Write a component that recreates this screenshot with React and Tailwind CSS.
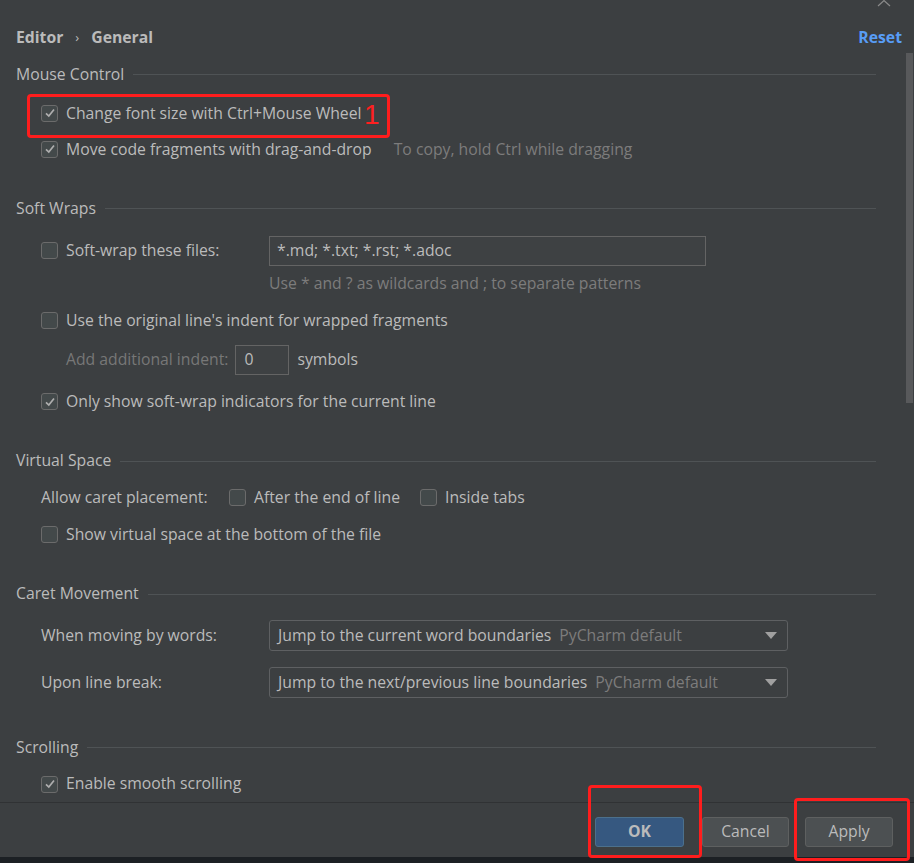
import React from "react";

const font = { fontFamily: '"Open Sans", "Noto Sans", sans-serif' };

function Box({ checked }) {
  return (
    <span className="w-[17px] h-[17px] shrink-0 rounded-[3px] border border-[#6b6b6b] bg-[#43494a] flex items-center justify-center">
      {checked && (
        <svg width="12" height="12" viewBox="0 0 12 12">
          <path d="M2 6.3 L4.8 9 L10 2.5" fill="none" stroke="#aeaeae" strokeWidth="1.7" />
        </svg>
      )}
    </span>
  );
}

function Check({ checked, label, className = "" }) {
  return (
    <div className={`flex items-center gap-[8px] ${className}`}>
      <Box checked={checked} />
      <span>{label}</span>
    </div>
  );
}

function Section({ title, className = "" }) {
  return (
    <div className={`h-[36px] flex items-center gap-[9px] ${className}`}>
      <span>{title}</span>
      <div className="flex-1 h-px bg-[#4f5355]" />
    </div>
  );
}

function Dropdown({ value, hint }) {
  return (
    <div className="w-[519px] h-[31px] rounded-[3px] border border-[#5e6062] flex items-center pl-[8px] pr-[10px]">
      <span>{value}</span>
      <span className="ml-[8px] text-[#7c7c7c]">{hint}</span>
      <svg className="ml-auto" width="12" height="7" viewBox="0 0 12 7">
        <path d="M0 0 H12 L6 7 Z" fill="#a0a0a0" />
      </svg>
    </div>
  );
}

export default function App() {
  return (
    <div className="w-[914px] h-[863px] bg-[#3c3f41] relative overflow-hidden text-[15.75px] text-[#bbbbbb]" style={font}>
      <div className="flex h-[802px]">
        <div className="flex-1 pl-[16px] pr-[30px] flex flex-col">
          {/* breadcrumb */}
          <div className="h-[36px] mt-[21px] flex items-center font-bold">
            <span>Editor</span>
            <span className="mx-[12px] font-normal text-[13px]">›</span>
            <span>General</span>
            <span className="ml-auto text-[#589df6] -mr-[26px]">Reset</span>
          </div>

          <Section title="Mouse Control" className="mt-[4px] w-[860px]" />
          <div className="pl-[25px] flex flex-col">
            <Check checked label="Change font size with Ctrl+Mouse Wheel" className="h-[36px] mt-[4px]" />
            <div className="h-[36px] flex items-center">
              <Check checked label="Move code fragments with drag-and-drop" />
              <span className="ml-[22px] text-[#7c7c7c]">To copy, hold Ctrl while dragging</span>
            </div>
          </div>

          <Section title="Soft Wraps" className="mt-[25px] w-[860px]" />
          <div className="pl-[25px] flex flex-col">
            <div className="h-[36px] mt-[7px] flex items-center">
              <Check label="Soft-wrap these files:" className="w-[228px]" />
              <div className="w-[437px] h-[30px] border border-[#646464] bg-[#3e4143] flex items-center pl-[7px]">*.md; *.txt; *.rst; *.adoc</div>
            </div>
            <div className="h-[24px] mt-[3px] pl-[228px] flex items-center text-[#7c7c7c]">
              Use * and ? as wildcards and ; to separate patterns
            </div>
            <Check label="Use the original line's indent for wrapped fragments" className="h-[36px] mt-[7px]" />
            <div className="h-[36px] mt-[3px] pl-[25px] flex items-center">
              <span className="text-[#777777]">Add additional indent:</span>
              <div className="ml-[7px] w-[54px] h-[30px] border border-[#646464] bg-[#3e4143] flex items-center pl-[8px]">0</div>
              <span className="ml-[8px]">symbols</span>
            </div>
            <Check checked label="Only show soft-wrap indicators for the current line" className="h-[36px] mt-[6px]" />
          </div>

          <Section title="Virtual Space" className="mt-[25px] w-[860px]" />
          <div className="pl-[25px] flex flex-col">
            <div className="h-[36px] mt-[2px] flex items-center">
              <span className="w-[188px]">Allow caret placement:</span>
              <Check label="After the end of line" />
              <Check label="Inside tabs" className="ml-[20px]" />
            </div>
            <Check label="Show virtual space at the bottom of the file" className="h-[36px] mt-[1px]" />
          </div>

          <Section title="Caret Movement" className="mt-[25px] w-[860px]" />
          <div className="pl-[25px] flex flex-col">
            <div className="h-[36px] mt-[7px] flex items-center">
              <span className="w-[228px]">When moving by words:</span>
              <Dropdown value="Jump to the current word boundaries" hint="PyCharm default" />
            </div>
            <div className="h-[36px] mt-[11px] flex items-center">
              <span className="w-[228px]">Upon line break:</span>
              <Dropdown value="Jump to the next/previous line boundaries" hint="PyCharm default" />
            </div>
          </div>

          <Section title="Scrolling" className="mt-[30px] w-[860px]" />
          <div className="pl-[25px]">
            <Check checked label="Enable smooth scrolling" className="h-[36px] mt-[2px]" />
          </div>
        </div>
        {/* scrollbar */}
        <div className="w-[12px] pt-[53px]">
          <div className="w-[7px] h-[350px] bg-[#58595b]" />
        </div>
      </div>

      {/* footer */}
      <div className="h-[55px] border-t border-[#303234] flex justify-end items-start pt-[14px] pr-[21px]">
        <button className="w-[89px] h-[30px] rounded-[3px] border border-[#4c708c] bg-[#365880] font-bold text-[#bbbbbb]">OK</button>
        <button className="ml-[18px] w-[87px] h-[30px] rounded-[3px] border border-[#5e6060] bg-[#4c5052] text-[#bbbbbb]">Cancel</button>
        <button className="ml-[16px] w-[88px] h-[30px] rounded-[3px] border border-[#5e6060] bg-[#4c5052] text-[#bbbbbb]">Apply</button>
      </div>
      <div className="h-[6px] bg-[#1c2024]" />

      {/* close chevron at top right */}
      <svg className="absolute left-[877px] top-0" width="14" height="7" viewBox="0 0 14 7">
        <path d="M1 6 L7 0.5 L13 6" fill="none" stroke="#8a8a8a" strokeWidth="1.2" />
      </svg>

      {/* red annotations */}
      <div className="absolute left-[27px] top-[94px] w-[363px] h-[44px] border-[3px] border-[#ff1d1d] rounded-[4px]" />
      <span className="absolute left-[364px] top-[97px] text-[28px] leading-[36px] text-[#ff2020]" style={{ fontFamily: '"Liberation Sans", sans-serif' }}>1</span>
      <div className="absolute left-[588px] top-[785px] w-[114px] h-[73px] border-[3px] border-[#ff1d1d] rounded-[4px]" />
      <div className="absolute left-[794px] top-[798px] w-[116px] h-[63px] border-[3px] border-[#ff1d1d] rounded-[4px]" />
    </div>
  );
}
